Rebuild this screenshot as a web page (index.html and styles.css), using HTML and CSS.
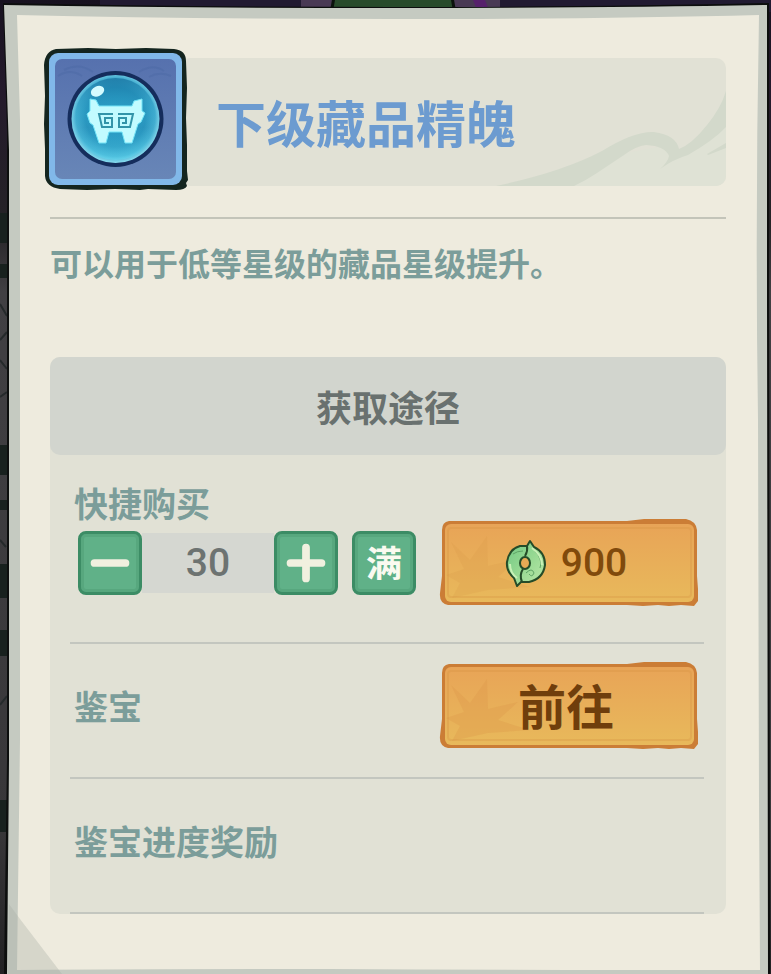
FILE: index.html
```html
<!DOCTYPE html>
<html lang="zh-CN">
<head>
<meta charset="utf-8">
<meta name="viewport" content="width=device-width, initial-scale=1">
<title>下级藏品精魄</title>
<link rel="stylesheet" href="styles.css">
</head>
<body>
<main class="dialog">
  <svg class="frame" viewBox="0 0 771 974" preserveAspectRatio="none" aria-hidden="true">
    <defs>
      <linearGradient id="backdrop" x2="0" y2="1">
        <stop offset="0" stop-color="#17111f"/><stop offset=".09" stop-color="#241a2c"/><stop offset=".23" stop-color="#252326"/><stop offset=".3" stop-color="#414043"/><stop offset=".85" stop-color="#383739"/><stop offset="1" stop-color="#222123"/>
      </linearGradient>
    </defs>
    <path fill="url(#backdrop)" d="M0 0H771V974H0Z"/>
    <path fill="#211a31" d="M100 0H771V12H100Z"/>
    <path fill="#493954" d="M301 0H500V12H301Z"/>
    <path fill="#56206b" d="M473 0h12l4 10h-12z"/>
    <path fill="#284b2b" stroke="#0b120c" stroke-width="3" d="M334 -3H452L455 14H331Z"/>
    <path fill="#18211e" d="M0 213h7v30H0zM0 264h7v14H0zM0 445h7v30H0zM0 500h7v10H0zM0 564h7v34H0zM0 630h7v26H0zM0 800h7v32H0z"/>
    <path stroke="#252a2b" stroke-width="2" fill="none" d="M0 304l7 12M0 340l7-8M0 360l7 9M0 397l7-5M0 540l6 7M0 705l7-9"/>
    <path fill="#0c0e0d" d="M3 3Q190 7 390 7Q610 7 769 3L769 240L770 974H4L7 760V130Z"/>
    <path fill="#c5cac1" d="M4 5Q190 8 390 8Q610 8 767 5L767 300L768 974H7L9 760V150Z"/>
    <path fill="#eeebde" d="M17 15Q190 19 390 19Q610 19 759 15Q755 220 758 420L759 800L760 970Q520 970 330 969Q150 969 17 970L20 740V120Z"/>
    <path fill="#aaafa5" opacity=".35" d="M9 904L20 919L62 974H8Z"/>
  </svg>

  <header class="hero">
    <svg class="item" viewBox="0 0 144 144" role="img" aria-label="下级藏品精魄图标">
      <defs>
        <linearGradient id="tile" x2="0" y2="1"><stop stop-color="#5671ae"/><stop offset="1" stop-color="#6886b7"/></linearGradient>
        <radialGradient id="orb" cx=".5" cy=".48" r=".52"><stop stop-color="#2b9fc7"/><stop offset=".65" stop-color="#2994bd"/><stop offset=".86" stop-color="#43accf"/><stop offset="1" stop-color="#8addf0"/></radialGradient>
        <linearGradient id="orbTop" x2="0" y2="1"><stop stop-color="#146d9c" stop-opacity=".7"/><stop offset=".6" stop-color="#35bee1" stop-opacity="0"/><stop offset="1" stop-color="#63def4" stop-opacity=".5"/></linearGradient>
      </defs>
      <path fill="#14251f" d="M12 1L44 0L72 1L102 0L130 1Q142 2 142 13L143 40L142 70L143 97V123L144 132L142 135L143 138Q141 142 132 142L104 141L96 142L71 141L43 142L16 141Q2 139 1 128L1 101L0 76L1 48L0 17Q1 3 12 1Z"/>
      <rect x="5" y="5" width="133" height="132" rx="9" fill="#81b8e9"/>
      <rect x="11" y="11" width="121" height="120" rx="7" fill="url(#tile)"/>
      <path fill="none" stroke="#47649e" stroke-width="2" opacity=".3" d="M14 28q12-8 24 0M20 22q15-8 29 2M95 24q14-9 25-1M105 29q10-6 22-1"/>
      <circle cx="71.500" cy="71" r="48" fill="#152d5c"/>
      <circle cx="71.500" cy="71" r="44" fill="url(#orb)"/>
      <circle cx="71.500" cy="71" r="41" fill="url(#orbTop)"/>
      <ellipse cx="53.500" cy="43" rx="7" ry="5" fill="#d4fbff" transform="rotate(-25 54 43)"/>
      <path fill="#c2fbff" stroke="#72e4f7" d="M46 51L52 52L55 58H88L90 53L98 51V63L101 65L97 74L94 76L88 95H81L78 84H65L62 95H55L49 77L46 75L43 66L46 63Z"/>
      <path fill="none" stroke="#3294a9" stroke-width="2" d="M69 66H55L58 79H68V70H61V75H65M74 66H89L86 79H75V70H82V75H78"/>
    </svg>
    <div class="hero-bar">
      <svg class="ribbon" viewBox="0 0 250 128" preserveAspectRatio="xMaxYMax slice" aria-hidden="true">
        <path fill="#dfe2d5" d="M98 128L150 95L183 89L203 93L250 65V128Z"/>
        <path fill="#d3d9cb" d="M20 128Q86 114 126 93Q158 73 178 74Q200 77 203 91Q216 86 231 67Q245 50 250 33V69Q238 82 212 97Q198 101 184 111Q192 104 193 98Q189 88 170 87Q160 88 148 97L121 115Q109 123 98 128Z"/>
        <path fill="#d3d9cb" d="M231 96l19-11v5l-18 7z"/>
      </svg>
      <h1 class="title">下级藏品精魄</h1>
    </div>
  </header>

  <p class="description">可以用于低等星级的藏品星级提升。</p>

  <section class="sources" aria-labelledby="sources-title">
    <h2 class="sources-title" id="sources-title">获取途径</h2>

    <div class="source quick">
      <div class="purchase">
        <label class="source-name" for="amount">快捷购买</label>
        <div class="stepper">
          <button class="square" type="button" aria-label="减少"><svg viewBox="0 0 38 38" aria-hidden="true"><path d="M5 19H33"/></svg></button>
          <input class="amount" id="amount" type="text" inputmode="numeric" value="30">
          <button class="square" type="button" aria-label="增加"><svg viewBox="0 0 38 38" aria-hidden="true"><path d="M5 19H33M19 5V33"/></svg></button>
          <button class="square max" type="button">满</button>
        </div>
      </div>
      <button class="action" type="button">
        <svg class="plate" viewBox="0 0 260 90" preserveAspectRatio="none" aria-hidden="true">
          <defs><linearGradient id="gold" x2="0" y2="1"><stop stop-color="#e8a457"/><stop offset="1" stop-color="#e8b95b"/></linearGradient></defs>
          <path fill="#cb7d36" d="M10 3L188 3L205 1L247 1Q257 3 258 12L258 58L259 71L259 83L255 88L242 87L230 88L219 87L204 88L188 87L9 87Q0 85 1 75L3 58V12Q3 4 10 3Z"/>
          <rect x="6" y="6" width="249" height="78" rx="6" fill="url(#gold)"/>
          <path fill="#d99448" opacity=".2" d="M12 24L31 42L48 18L49 48L79 41L59 59L91 69L49 72L13 80L21 65L7 57L25 51Z"/>
          <rect x="9" y="10" width="243" height="69" rx="3" fill="none" stroke="#d89545" stroke-width="2" opacity=".35"/>
        </svg>
        <svg class="jade" viewBox="0 0 42 48" aria-hidden="true">
          <defs><linearGradient id="jade" x2="1" y2="1"><stop stop-color="#70c783"/><stop offset=".5" stop-color="#96d992"/><stop offset="1" stop-color="#bce9a9"/></linearGradient></defs>
          <path fill="url(#jade)" stroke="#254c29" stroke-width="2" stroke-linejoin="round" d="M25 2L29 8Q40 13 40 26Q38 40 24 43L16 43L12 47L9 39Q1 32 2 23Q4 10 15 7L22 7Z"/>
          <path fill="none" stroke="#254c29" stroke-width="2" d="M22 7Q23 12 20 17M18 30Q14 36 17 43"/>
          <path fill="none" stroke="#5fa466" stroke-width="1" d="M8 15Q12 12 18 12M30 12Q38 21 35 29M21 34Q27 28 29 34Q27 39 24 35"/>
          <path fill="none" stroke="#c9f1b7" stroke-width="2" d="M27 9Q37 16 37 26M5 25Q5 34 12 39"/>
          <ellipse cx="20" cy="24" rx="5" ry="6" fill="#e7aa55" stroke="#254c29" stroke-width="2"/>
        </svg>
        <span class="price">900</span>
      </button>
    </div>

    <div class="source">
      <span class="source-name">鉴宝</span>
      <button class="action" type="button">
        <svg class="plate" viewBox="0 0 260 90" preserveAspectRatio="none" aria-hidden="true">
          <path fill="#cb7d36" d="M10 3L188 3L205 1L247 1Q257 3 258 12L258 58L259 71L259 83L255 88L242 87L230 88L219 87L204 88L188 87L9 87Q0 85 1 75L3 58V12Q3 4 10 3Z"/>
          <rect x="6" y="6" width="249" height="78" rx="6" fill="url(#gold)"/>
          <path fill="#d99448" opacity=".3" d="M12 24L31 42L48 18L49 48L79 41L59 59L91 69L49 72L13 80L21 65L7 57L25 51Z"/>
          <rect x="9" y="10" width="243" height="69" rx="3" fill="none" stroke="#d89545" stroke-width="2" opacity=".35"/>
        </svg>
        <span class="go">前往</span>
      </button>
    </div>

    <div class="source">
      <span class="source-name">鉴宝进度奖励</span>
    </div>
  </section>
</main>
</body>
</html>
```
FILE: styles.css
```css
* {
  box-sizing: border-box;
}

body {
  margin: 0;
  background: #222123;
  font-family: "Noto Sans CJK SC", sans-serif;
  font-weight: 700;
}

h1,
h2,
p {
  margin: 0;
}

button,
input {
  margin: 0;
  padding: 0;
  border: 0;
  font: inherit;
}

button {
  cursor: pointer;
}

.dialog {
  position: relative;
  isolation: isolate;
  min-height: 100vh;
  padding: 48px 45px 60px 50px;
}

.frame,
.plate,
.ribbon {
  position: absolute;
  z-index: -1;
  inset: 0;
  width: 100%;
  height: 100%;
}

.hero {
  display: flex;
  align-items: flex-end;
  margin-left: -6px;
  padding-bottom: 25px;
}

.item {
  position: relative;
  z-index: 1;
  flex: none;
  width: 144px;
  height: 144px;
}

.hero-bar {
  position: relative;
  isolation: isolate;
  display: flex;
  flex: 1;
  align-items: center;
  height: 128px;
  margin: 0 0 6px -8px;
  padding-left: 36px;
  overflow: hidden;
  border-radius: 10px;
  background: #e1e1d5;
}

.ribbon {
  left: auto;
  width: 250px;
}

.title {
  padding-bottom: 2px;
  color: #6c9bd0;
  font-size: 50px;
  line-height: 60px;
  white-space: nowrap;
}

.description {
  padding: 20px 0 72px;
  border-top: 2px solid #c3c4b9;
  color: #7b9d9a;
  font-size: 32px;
  line-height: 46px;
}

.sources {
  border-radius: 10px;
  background: #e1e1d5;
}

.sources-title {
  height: 98px;
  border-radius: 10px;
  background: #d2d5ce;
  color: #69716f;
  font-size: 36px;
  line-height: 98px;
  text-align: center;
}

.source {
  display: flex;
  align-items: center;
  justify-content: space-between;
  min-height: 135px;
  margin: 0 22px 0 20px;
  padding: 0 5px 10px 4px;
  border-bottom: 2px solid #c3c6bf;
}

.quick {
  align-items: flex-end;
  min-height: 189px;
  padding-bottom: 34px;
}

.source-name {
  color: #7b9d9a;
  font-size: 34px;
  line-height: 50px;
}

.purchase {
  display: flex;
  flex-direction: column;
  padding-bottom: 13px;
}

.stepper {
  display: flex;
  align-items: center;
  padding: 3px 0 0 4px;
}

.square {
  display: grid;
  width: 64px;
  height: 64px;
  place-items: center;
  border: 3px solid #3c8c65;
  border-radius: 8px;
  background: #60b188;
  box-shadow: inset 0 0 0 3px #57a77e;
  color: #fafaf0;
}

.square svg {
  width: 42px;
  height: 42px;
  fill: none;
  stroke: #f1f0df;
  stroke-linecap: round;
  stroke-width: 7px;
}

.max {
  margin-left: 14px;
  padding-bottom: 4px;
  font-size: 36px;
  line-height: 40px;
}

.amount {
  width: 132px;
  height: 60px;
  background: #d5d7d1;
  color: #6d7371;
  font-family: Roboto, sans-serif;
  font-size: 39px;
  font-weight: 500;
  text-align: center;
}

.action {
  position: relative;
  isolation: isolate;
  display: flex;
  align-items: center;
  justify-content: center;
  gap: 14px;
  width: 260px;
  height: 90px;
  padding-right: 6px;
  background: none;
  color: #804a0c;
}

.jade {
  width: 42px;
  height: 48px;
}

.price {
  font-family: Roboto, sans-serif;
  font-size: 39px;
  font-weight: 500;
}

.go {
  padding-bottom: 4px;
  color: #6f3e0c;
  font-size: 48px;
  line-height: 60px;
}
```
